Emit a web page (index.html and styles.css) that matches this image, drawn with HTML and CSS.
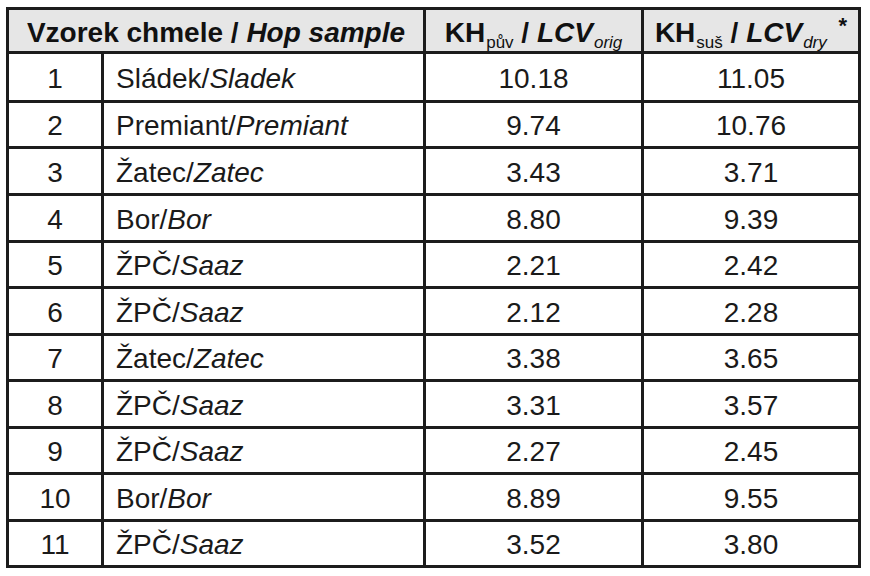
FILE: index.html
```html
<!DOCTYPE html>
<html lang="cs">
<head>
<meta charset="utf-8">
<title>Vzorek chmele</title>
<link rel="stylesheet" href="styles.css">
</head>
<body>
<table class="hops">
  <colgroup>
    <col class="c-num"><col class="c-name"><col class="c-val"><col class="c-val2">
  </colgroup>
  <thead>
    <tr class="head">
      <th colspan="2">Vzorek chmele / <i>Hop sample</i></th>
      <th>KH<sub>pův</sub> / <i>LCV<sub>orig</sub></i></th>
      <th>KH<sub>suš</sub> / <i>LCV<sub>dry</sub></i> <sup>*</sup></th>
    </tr>
  </thead>
  <tbody>
    <tr class="r1"><td class="num">1</td><td class="name">Sládek/<i>Sladek</i></td><td>10.18</td><td>11.05</td></tr>
    <tr class="r2"><td class="num">2</td><td class="name">Premiant/<i>Premiant</i></td><td>9.74</td><td>10.76</td></tr>
    <tr class="r3"><td class="num">3</td><td class="name">Žatec/<i>Zatec</i></td><td>3.43</td><td>3.71</td></tr>
    <tr class="r3"><td class="num">4</td><td class="name">Bor/<i>Bor</i></td><td>8.80</td><td>9.39</td></tr>
    <tr class="r2"><td class="num">5</td><td class="name">ŽPČ/<i>Saaz</i></td><td>2.21</td><td>2.42</td></tr>
    <tr class="r3"><td class="num">6</td><td class="name">ŽPČ/<i>Saaz</i></td><td>2.12</td><td>2.28</td></tr>
    <tr class="r2"><td class="num">7</td><td class="name">Žatec/<i>Zatec</i></td><td>3.38</td><td>3.65</td></tr>
    <tr class="r3"><td class="num">8</td><td class="name">ŽPČ/<i>Saaz</i></td><td>3.31</td><td>3.57</td></tr>
    <tr class="r2"><td class="num">9</td><td class="name">ŽPČ/<i>Saaz</i></td><td>2.27</td><td>2.45</td></tr>
    <tr class="r3"><td class="num">10</td><td class="name">Bor/<i>Bor</i></td><td>8.89</td><td>9.55</td></tr>
    <tr class="r2"><td class="num">11</td><td class="name">ŽPČ/<i>Saaz</i></td><td>3.52</td><td>3.80</td></tr>
  </tbody>
</table>
</body>
</html>
```
FILE: styles.css
```css
html, body {
  margin: 0;
  padding: 0;
  background: #ffffff;
}
body {
  padding: 7px 0 0 6px;
  font-family: "Liberation Sans", Arial, sans-serif;
  color: #1a1a1a;
}
.hops {
  border-collapse: separate;
  border-spacing: 3px;
  background: #1c1c1c;
  table-layout: fixed;
  width: 855px;
}
.c-num { width: 92px; }
.c-name { width: 319px; }
.c-val { width: 215px; }
.c-val2 { width: 214px; }
.hops th, .hops td {
  padding: 3px 0 0 0;
  background: #ffffff;
  text-align: center;
  vertical-align: middle;
  font-size: 28px;
  line-height: 1;
  white-space: nowrap;
}
.hops th {
  background: #e6e6e6;
  font-weight: bold;
  font-size: 28px;
  color: #111;
  padding-top: 5px;
}
.head { height: 41px; }
.r1 { height: 46px; }
.r2 { height: 43px; }
.r3 { height: 44px; }
.hops td.name {
  text-align: left;
  padding-left: 12px;
}
.hops sub {
  font-size: 17px;
  font-weight: normal;
  vertical-align: -6px;
  line-height: 0;
  margin-left: 1px;
}
.hops i sub { font-style: italic; }
.hops sup {
  font-size: 22px;
  vertical-align: 9px;
  line-height: 0;
  margin-left: 4px;
}
```
